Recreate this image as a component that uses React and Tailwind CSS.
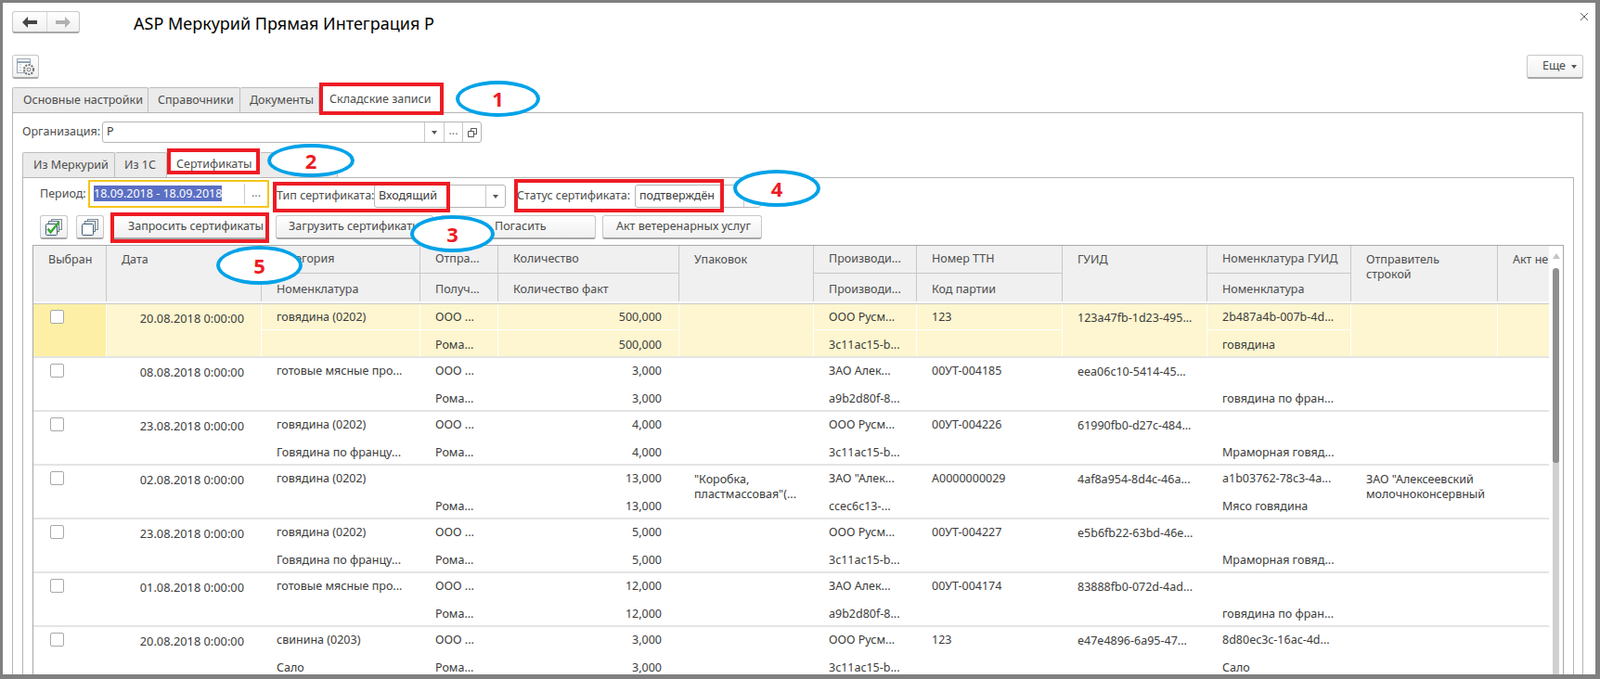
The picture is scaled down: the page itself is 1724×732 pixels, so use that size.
const COLS = 'grid grid-cols-[79px_167px_171px_84px_195px_145px_111px_157px_156px_155px_158px_55px]';

const ROWS = [
  { date: '20.08.2018 0:00:00', cat: 'говядина (0202)', nom: '', from: 'ООО ...', to: 'Рома...', qty: '500,000', pack: '', prod: 'ООО Русм...', prodId: '3c11ac15-b...', ttn: '123', guid: '123a47fb-1d23-495...', nomGuid: '2b487a4b-007b-4d...', nomName: 'говядина', sender: '', selected: true },
  { date: '08.08.2018 0:00:00', cat: 'готовые мясные про...', nom: '', from: 'ООО ...', to: 'Рома...', qty: '3,000', pack: '', prod: 'ЗАО Алек...', prodId: 'a9b2d80f-8...', ttn: '00УТ-004185', guid: 'eea06c10-5414-45...', nomGuid: '', nomName: 'говядина по фран...', sender: '' },
  { date: '23.08.2018 0:00:00', cat: 'говядина (0202)', nom: 'Говядина по францу...', from: 'ООО ...', to: 'Рома...', qty: '4,000', pack: '', prod: 'ООО Русм...', prodId: '3c11ac15-b...', ttn: '00УТ-004226', guid: '61990fb0-d27c-484...', nomGuid: '', nomName: 'Мраморная говяд...', sender: '' },
  { date: '02.08.2018 0:00:00', cat: 'говядина (0202)', nom: '', from: '', to: 'Рома...', qty: '13,000', pack: ['"Коробка,', 'пластмассовая"(...'], prod: 'ЗАО "Алек...', prodId: 'ccec6c13-...', ttn: 'А0000000029', guid: '4af8a954-8d4c-46a...', nomGuid: 'a1b03762-78c3-4a...', nomName: 'Мясо говядина', sender: ['ЗАО "Алексеевский', 'молочноконсервный'] },
  { date: '23.08.2018 0:00:00', cat: 'говядина (0202)', nom: 'Говядина по францу...', from: 'ООО ...', to: 'Рома...', qty: '5,000', pack: '', prod: 'ООО Русм...', prodId: '3c11ac15-b...', ttn: '00УТ-004227', guid: 'e5b6fb22-63bd-46e...', nomGuid: '', nomName: 'Мраморная говяд...', sender: '' },
  { date: '01.08.2018 0:00:00', cat: 'готовые мясные про...', nom: '', from: 'ООО ...', to: 'Рома...', qty: '12,000', pack: '', prod: 'ЗАО Алек...', prodId: 'a9b2d80f-8...', ttn: '00УТ-004174', guid: '83888fb0-072d-4ad...', nomGuid: '', nomName: 'говядина по фран...', sender: '' },
  { date: '20.08.2018 0:00:00', cat: 'свинина (0203)', nom: 'Сало', from: 'ООО ...', to: 'Рома...', qty: '3,000', pack: '', prod: 'ООО Русм...', prodId: '3c11ac15-b...', ttn: '123', guid: 'e47e4896-6a95-47...', nomGuid: '8d80ec3c-16ac-4d...', nomName: 'Сало', sender: '' },
];

const BTN = 'flex items-center whitespace-nowrap bg-gradient-to-b from-white to-[#f0f0f0] border border-[#c8c8c8] border-b-2 border-b-[#a8a8a8] rounded-[3px] text-[#4a4a4a]';

function StackIcon({ checked }) {
  return (
    <svg width="20" height="20" viewBox="0 0 20 20" fill="none">
      <rect x="7.5" y="1.5" width="11" height="11" fill="#e8edf2" stroke="#7d8a97" />
      <rect x="4.5" y="3.5" width="11" height="11" fill="#eef2f5" stroke="#6f7d8b" />
      <rect x="1.5" y="6.5" width="12" height="12" rx="1" fill="#fff" stroke="#3d5a73" />
      {checked && <path d="M3.5 11.5l3 4 9-11" stroke="#3aa935" strokeWidth="2.6" />}
    </svg>
  );
}

function GearIcon() {
  return (
    <svg width="22" height="20" viewBox="0 0 22 20" fill="none">
      <rect x="1.5" y="1.5" width="14" height="15" fill="#fff" stroke="#9aa7b4" />
      <path d="M1.5 5h14" stroke="#8fa4ba" strokeWidth="2" />
      <path d="M5 7v8" stroke="#9aa7b4" strokeDasharray="1.5 1.5" />
      <circle cx="14" cy="13" r="5" fill="#fff" stroke="#777" strokeWidth="2.2" strokeDasharray="2 1.2" />
      <circle cx="14" cy="13" r="2" fill="#fff" stroke="#777" />
    </svg>
  );
}

function Caret() {
  return <span className="w-0 h-0 border-x-[3px] border-x-transparent border-t-[4px] border-t-[#555]" />;
}

function Header() {
  const top = 'h-[30px] border-b border-[#c8c8c8] flex items-center pl-[16px] bg-[#f0f0f0] border-r border-r-[#c8c8c8] whitespace-nowrap overflow-hidden';
  const bottom = 'h-[30px] flex items-center pl-[16px] pt-[4px] bg-[#f0f0f0] border-r border-r-[#c8c8c8] whitespace-nowrap overflow-hidden';
  const tall = 'row-span-2 pl-[16px] pt-[7px] leading-[16px] bg-[#f0f0f0] border-r border-r-[#c8c8c8] whitespace-nowrap overflow-hidden';
  return (
    <div className={`${COLS} grid-rows-[30px_30px] h-[63px] border-b-[1px] border-[#c8c8c8] pb-[2px] text-[#4d4d4d]`}>
      <div className={tall}>Выбран</div>
      <div className={tall}>Дата</div>
      <div className={top}>Категория</div>
      <div className={top}>Отпра...</div>
      <div className={top}>Количество</div>
      <div className={tall}>Упаковок</div>
      <div className={top}>Производи...</div>
      <div className={top}>Номер ТТН</div>
      <div className={tall}>ГУИД</div>
      <div className={top}>Номенклатура ГУИД</div>
      <div className={tall}>Отправитель<br />строкой</div>
      <div className={`${tall} border-r-0`}>Акт не</div>
      <div className={bottom}>Номенклатура</div>
      <div className={bottom}>Получ...</div>
      <div className={bottom}>Количество факт</div>
      <div className={bottom}>Производи...</div>
      <div className={bottom}>Код партии</div>
      <div className={bottom}>Номенклатура</div>
    </div>
  );
}

function Row({ row }) {
  const sep = row.selected ? 'border-r border-white' : 'border-r border-transparent';
  const line = row.selected ? 'border-b border-white' : 'border-b border-transparent';
  const rowBg = row.selected ? 'bg-[#fdf6d0]' : 'bg-white';
  const tall = `row-span-2 ${sep} ${rowBg} overflow-hidden`;
  const top = `h-[28px] flex items-center pl-[16px] pt-[2px] whitespace-nowrap overflow-hidden ${sep} ${line} ${rowBg}`;
  const bottom = `h-[28px] flex items-center pl-[16px] pt-[4px] whitespace-nowrap overflow-hidden ${sep} ${rowBg}`;
  const qtyTop = `h-[28px] flex items-center justify-end pr-[18px] pt-[2px] ${sep} ${line} ${rowBg}`;
  const qtyBottom = `h-[28px] flex items-center justify-end pr-[18px] pt-[4px] ${sep} ${rowBg}`;
  return (
    <div className={`${COLS} grid-rows-[28px_28px] h-[58px] border-b-2 border-[#e4e4e4] text-[#3c3c3c]`}>
      <div className={`row-span-2 ${sep} pl-[18px] pt-[6px] ${row.selected ? 'bg-[#fdf0a6]' : 'bg-white'}`}>
        <div className="w-[15px] h-[15px] bg-white border border-[#a8a8a8] rounded-[2px]" />
      </div>
      <div className={`${tall} text-right text-[12.8px] pr-[18px] pt-[7px] leading-[16px]`}>{row.date}</div>
      <div className={top}>{row.cat}</div>
      <div className={top}>{row.from}</div>
      <div className={qtyTop}>{row.qty}</div>
      <div className={`${tall} pl-[16px] pt-[7px] leading-[16px] whitespace-nowrap`}>
        {row.pack && row.pack.map((t) => <div key={t}>{t}</div>)}
      </div>
      <div className={top}>{row.prod}</div>
      <div className={top}>{row.ttn}</div>
      <div className={`${tall} pl-[16px] pt-[7px] leading-[16px] whitespace-nowrap`}>{row.guid}</div>
      <div className={top}>{row.nomGuid}</div>
      <div className={`${tall} pl-[16px] pt-[7px] leading-[16px] whitespace-nowrap`}>
        {row.sender && row.sender.map((t) => <div key={t}>{t}</div>)}
      </div>
      <div className={`${tall} border-r-0`} />
      <div className={bottom}>{row.nom}</div>
      <div className={bottom}>{row.to}</div>
      <div className={qtyBottom}>{row.qty}</div>
      <div className={bottom}>{row.prodId}</div>
      <div className={bottom} />
      <div className={bottom}>{row.nomName}</div>
    </div>
  );
}

function Ellipse({ className, digit }) {
  return (
    <div className={`absolute flex items-center justify-center bg-white border-[4px] border-[#00a2e8] rounded-[50%] [font-family:'Noto_Sans',sans-serif] font-bold text-[22px] text-[#ed1c24] ${className}`}>
      {digit}
    </div>
  );
}

export default function App() {
  return (
    <div className="relative w-[1724px] h-[732px] overflow-hidden bg-[#808080] pt-[3px] pl-[3px] pr-[5px] pb-[5px] [font-family:'Liberation_Sans',sans-serif] text-[12.5px]">
      <div className="h-full bg-white flex flex-col overflow-hidden">

        {/* Title bar */}
        <div className="flex items-start pt-[9px] pl-[10px] pr-[7px] h-[33px] shrink-0">
          <div className={`${BTN} w-[73px] h-[24px]`}>
            <div className="w-[37px] h-full flex items-center justify-center border-r border-[#d8d8d8]">
              <svg width="16" height="12" viewBox="0 0 16 12"><path d="M0 6l6-6v4h10v4H6v4z" fill="#444" /></svg>
            </div>
            <div className="flex-1 flex items-center justify-center">
              <svg width="16" height="12" viewBox="0 0 16 12"><path d="M16 6l-6-6v4H0v4h10v4z" fill="#b0b0b0" /></svg>
            </div>
          </div>
          <div className="ml-[58px] text-[18px] leading-[26px] text-black">ASP Меркурий Прямая Интеграция Р</div>
          <div className="ml-auto pt-[1px] text-[#666]">
            <svg width="10" height="10" viewBox="0 0 10 10"><path d="M1 1l8 8M9 1l-8 8" stroke="#666" strokeWidth="1" /></svg>
          </div>
        </div>

        {/* Toolbar */}
        <div className="flex items-center justify-between pl-[10px] pr-[13px] mt-[23px] h-[26px] shrink-0">
          <div className={`${BTN} w-[29px] h-[26px] justify-center`}><GearIcon /></div>
          <div className={`${BTN} w-[61px] h-[26px] justify-end gap-[6px] pr-[6px]`}>
            Еще <Caret />
          </div>
        </div>

        {/* Main tabs */}
        <div className="flex ml-[10px] mt-[9px] h-[27px] shrink-0 whitespace-nowrap">
          <div className="w-[147px] pl-[11px] flex items-center bg-[#ebebeb] border border-b-0 border-[#bdbdbd] rounded-t-[2px] text-[#4d4d4d]">Основные настройки</div>
          <div className="w-[99px] pl-[10px] flex items-center bg-[#ebebeb] border border-b-0 border-l-0 border-[#bdbdbd] rounded-t-[2px] text-[#4d4d4d]">Справочники</div>
          <div className="w-[85px] pl-[10px] flex items-center bg-[#ebebeb] border border-b-0 border-l-0 border-[#bdbdbd] rounded-t-[2px] text-[#4d4d4d]">Документы</div>
          <div className="w-[134px] pl-[11px] flex items-center bg-white text-[#4d4d4d]">Складские записи</div>
        </div>

        {/* Main panel */}
        <div className="flex-1 min-h-0 ml-[10px] mr-[13px] border border-b-0 border-[#b5b5b5] flex flex-col">
          <div className="flex items-center mt-[9px] ml-[10px] h-[23px] shrink-0 text-[#4d4d4d]">
            <div className="w-[86px]">Организация:</div>
            <div className="w-[409px] h-[23px] flex items-center border border-[#b5b5b5] rounded-[3px] text-[#3c3c3c]">
              <div className="flex-1 pl-[4px]">Р</div>
              <div className="w-[21px] h-full flex items-center justify-center border-l border-[#c8c8c8]"><Caret /></div>
              <div className="w-[20px] h-full flex items-center justify-center border-l border-[#c8c8c8] text-[#777] pb-[2px]">...</div>
              <div className="w-[20px] h-full flex items-center justify-center border-l border-[#c8c8c8]">
                <svg width="10" height="10" viewBox="0 0 10 10" fill="none"><path d="M3.5 3V.5h6v6H7M.5 3.5h6v6h-6z" stroke="#555" /></svg>
              </div>
            </div>
          </div>

          {/* Sub tabs */}
          <div className="flex ml-[10px] mt-[10px] h-[27px] shrink-0 text-[#4d4d4d] whitespace-nowrap">
            <div className="w-[100px] pl-[11px] flex items-center bg-[#ebebeb] border border-b-0 border-[#bdbdbd] rounded-t-[2px]">Из Меркурий</div>
            <div className="w-[56px] pl-[10px] flex items-center bg-[#ebebeb] border border-b-0 border-l-0 border-[#bdbdbd] rounded-t-[2px]">Из 1С</div>
            <div className="w-[100px] pl-[10px] flex items-center bg-white">Сертификаты</div>
            <div className="w-[84px] bg-[#ebebeb] border border-b-0 border-l-0 border-[#bdbdbd] rounded-t-[2px]" />
          </div>

          {/* Sub panel */}
          <div className="flex-1 min-h-0 ml-[10px] mr-[9px] border border-b-0 border-[#b5b5b5] flex flex-col">
            <div className="flex items-end h-[30px] mt-[2px] ml-[18px] shrink-0 text-[#4d4d4d] whitespace-nowrap">
              <div className="w-[52px] self-center">Период:</div>
              <div className="w-[195px] h-[30px] flex items-center border-2 border-[#f5c518] rounded-[1px]">
                <div className="flex-1 pl-[4px]">
                  <span className="bg-[#5b6fc4] text-white">18.09.2018 - 18.09.2018</span>
                </div>
                <div className="w-[25px] h-[22px] flex items-center justify-center border-l border-[#c8c8c8] text-[#777] pb-[2px]">...</div>
              </div>
              <div className="w-[113px] h-[25px] flex items-center pl-[8px]">Тип сертификата:</div>
              <div className="w-[142px] h-[25px] flex items-center border border-[#b5b5b5] rounded-[3px] text-[#3c3c3c]">
                <div className="flex-1 pl-[4px]">Входящий</div>
                <div className="w-[21px] h-full flex items-center justify-center border-l border-[#c8c8c8]"><Caret /></div>
              </div>
              <div className="w-[139px] h-[25px] flex items-center pl-[12px]">Статус сертификата:</div>
              <div className="w-[136px] h-[25px] flex items-center border border-[#b5b5b5] rounded-[3px] text-[#3c3c3c]">
                <div className="flex-1 pl-[4px]">подтверждён</div>
                <div className="w-[18px] h-full border-l border-[#c8c8c8]" />
              </div>
            </div>

            <div className="flex items-center gap-[7px] h-[26px] mt-[8px] ml-[18px] shrink-0 whitespace-nowrap">
              <div className={`${BTN} w-[30px] h-[26px] justify-center mr-[2px]`}><StackIcon checked /></div>
              <div className={`${BTN} w-[30px] h-[26px] justify-center`}><StackIcon /></div>
              <div className={`${BTN} w-[171px] h-[26px] pl-[18px]`}>Запросить сертификаты</div>
              <div className={`${BTN} w-[170px] h-[26px] pl-[13px]`}>Загрузить сертификаты</div>
              <div className={`${BTN} w-[168px] h-[26px] pl-[58px]`}>Погасить</div>
              <div className={`${BTN} w-[172px] h-[26px] pl-[14px]`}>Акт ветеренарных услуг</div>
            </div>

            {/* Table */}
            <div className="flex-1 min-h-0 mt-[6px] ml-[10px] w-[1650px] border border-b-0 border-[#a8a8a8] flex overflow-hidden">
              <div className="w-[1633px] shrink-0">
                <Header />
                {ROWS.map((row, i) => <Row key={i} row={row} />)}
              </div>
              <div className="flex-1 flex flex-col items-center pt-[8px]">
                <div className="w-0 h-0 border-x-[4px] border-x-transparent border-b-[6px] border-b-[#c4c4c4]" />
                <div className="w-[7px] h-[210px] mt-[10px] bg-[#8f8f8f] rounded-t-[4px] rounded-b-[3px] shrink-0" />
                <div className="w-[7px] flex-1 bg-[#d0d0d0]" />
              </div>
            </div>
          </div>
        </div>
      </div>

      {/* Annotations over the screenshot */}
      <div className="absolute left-[344px] top-[89px] w-[134px] h-[35px] border-[4px] border-[#ed1c24]" />
      <div className="absolute left-[180px] top-[160px] w-[100px] h-[28px] border-[4px] border-[#ed1c24]" />
      <div className="absolute left-[294px] top-[196px] w-[191px] h-[33px] border-[4px] border-[#ed1c24]" />
      <div className="absolute left-[554px] top-[193px] w-[226px] h-[36px] border-[4px] border-[#ed1c24]" />
      <div className="absolute left-[119px] top-[229px] w-[171px] h-[33px] border-[4px] border-[#ed1c24]" />
      <Ellipse className="left-[491px] top-[87px] w-[91px] h-[39px]" digit="1" />
      <Ellipse className="left-[288px] top-[155px] w-[94px] h-[36px]" digit="2" />
      <Ellipse className="left-[442px] top-[232px] w-[91px] h-[40px]" digit="3" />
      <Ellipse className="left-[790px] top-[183px] w-[94px] h-[40px]" digit="4" />
      <Ellipse className="left-[233px] top-[265px] w-[93px] h-[42px]" digit="5" />
    </div>
  );
}
